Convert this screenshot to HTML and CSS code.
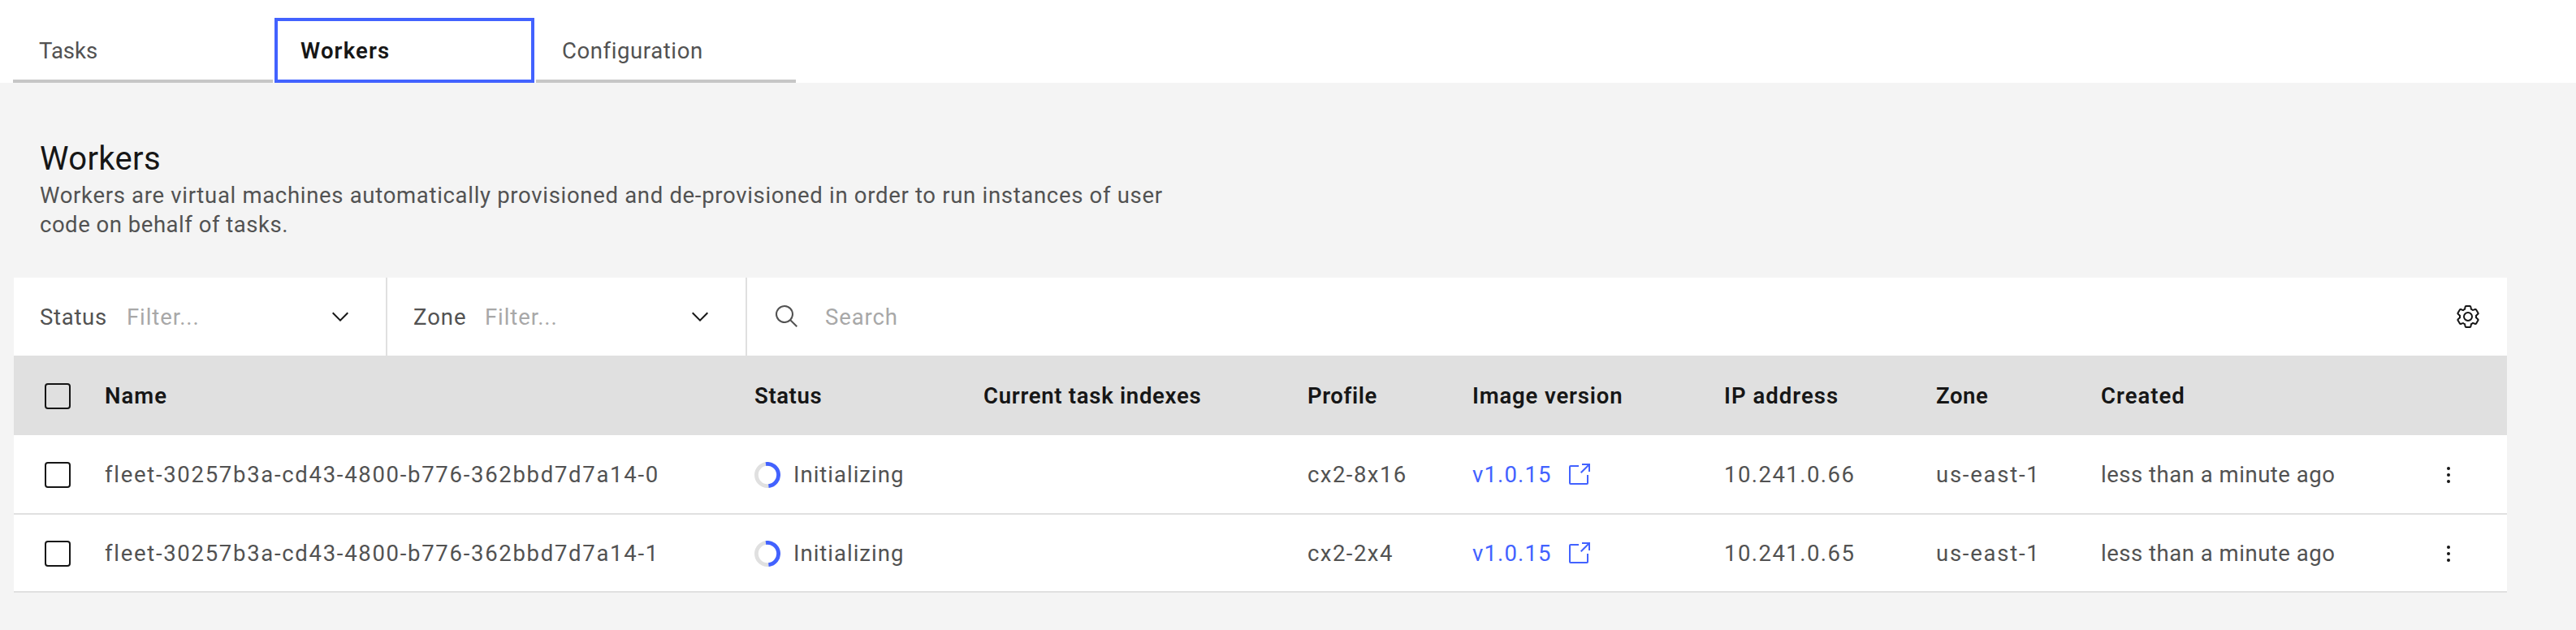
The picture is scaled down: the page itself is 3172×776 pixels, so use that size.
FILE: index.html
```html
<!DOCTYPE html>
<html lang="en">
<head>
<meta charset="utf-8">
<title>Workers</title>
<link rel="stylesheet" href="styles.css">
</head>
<body>
<svg class="defs" width="0" height="0" aria-hidden="true">
  <symbol id="chevron" viewBox="0 0 32 32"><path d="M16 22 6 12l1.4-1.4 8.6 8.6 8.6-8.6L26 12z"/></symbol>
  <symbol id="search" viewBox="0 0 32 32"><path d="m29 27.586-7.552-7.552a11.018 11.018 0 1 0-1.414 1.414L27.586 29ZM4 13a9 9 0 1 1 9 9 9.01 9.01 0 0 1-9-9Z"/></symbol>
  <symbol id="gear" viewBox="0 0 32 32"><path d="M27 16.76v-.76-.77l1.92-1.68A2 2 0 0 0 29.300 11l-2.360-4a2 2 0 0 0-1.730-1 2 2 0 0 0-.64.1l-2.430.82a11.350 11.350 0 0 0-1.310-.75l-.51-2.520a2 2 0 0 0-2-1.610h-4.680a2 2 0 0 0-2 1.610l-.51 2.520a11.480 11.480 0 0 0-1.320.75l-2.380-.86A2 2 0 0 0 6.790 6a2 2 0 0 0-1.730 1L2.700 11a2 2 0 0 0 .41 2.510L5 15.240v1.530l-1.890 1.680A2 2 0 0 0 2.700 21l2.360 4a2 2 0 0 0 1.730 1 2 2 0 0 0 .64-.1l2.430-.82a11.350 11.350 0 0 0 1.310.75l.51 2.520a2 2 0 0 0 2 1.610h4.720a2 2 0 0 0 2-1.610l.51-2.520a11.480 11.480 0 0 0 1.320-.75l2.420.82a2 2 0 0 0 .64.1 2 2 0 0 0 1.730-1l2.280-4a2 2 0 0 0-.41-2.510ZM25.210 24l-3.430-1.160a8.860 8.860 0 0 1-2.710 1.570L18.360 28h-4.720l-.71-3.550a9.360 9.360 0 0 1-2.700-1.570L6.790 24l-2.360-4 2.720-2.400a8.900 8.900 0 0 1 0-3.130L4.430 12l2.360-4 3.430 1.160a8.860 8.860 0 0 1 2.710-1.570L13.640 4h4.720l.71 3.550a9.360 9.360 0 0 1 2.700 1.570L25.210 8l2.360 4-2.720 2.400a8.900 8.900 0 0 1 0 3.130L27.570 20Z"/><path d="M16 22a6 6 0 1 1 6-6 5.940 5.940 0 0 1-6 6Zm0-10a3.910 3.910 0 0 0-4 4 3.910 3.910 0 0 0 4 4 3.910 3.910 0 0 0 4-4 3.910 3.910 0 0 0-4-4Z"/></symbol>
  <symbol id="launch" viewBox="0 0 32 32"><path d="M26 28H6a2 2 0 0 1-2-2V6a2 2 0 0 1 2-2h10v2H6v20h20V16h2v10a2 2 0 0 1-2 2Z"/><path d="M20 2v2h6.586L18 12.586 19.414 14 28 5.414V12h2V2H20z"/></symbol>
  <symbol id="dots" viewBox="0 0 32 32"><circle cx="16" cy="8" r="2"/><circle cx="16" cy="16" r="2"/><circle cx="16" cy="24" r="2"/></symbol>
  <symbol id="spinner" viewBox="0 0 32 32"><circle class="track" cx="16" cy="16" r="13.6"/><path class="arc" d="M14 2.550A13.600 13.600 0 1 1 17.400 29.530"/></symbol>
</svg>

<nav class="tabs">
  <a class="tab ls-tasks">Tasks</a>
  <a class="tab active">Workers</a>
  <a class="tab ls-6">Configuration</a>
</nav>

<main>
  <header class="intro">
    <h1>Workers</h1>
    <p>Workers are virtual machines automatically provisioned and de-provisioned in order to run instances of user<br><span class="ls-5">code on behalf of tasks.</span></p>
  </header>

  <section class="panel">
    <div class="toolbar">
      <div class="filter status"><label>Status</label><span class="hint">Filter...</span><svg class="icon"><use href="#chevron"/></svg></div>
      <div class="filter zone"><label>Zone</label><span class="hint">Filter...</span><svg class="icon"><use href="#chevron"/></svg></div>
      <div class="search"><svg class="icon"><use href="#search"/></svg><span class="hint">Search</span></div>
      <svg class="icon gear"><use href="#gear"/></svg>
    </div>

    <div class="row head">
      <span class="box"></span><span>Name</span><span class="ls-6">Status</span><span class="ls-7">Current task indexes</span><span class="ls-6">Profile</span><span class="ls-8">Image version</span><span>IP address</span><span class="ls-6">Zone</span><span>Created</span><span></span>
    </div>
    <div class="row">
      <span class="box"></span><span class="id">fleet-30257b3a-cd43-4800-b776-362bbd7d7a14-0</span><span class="state"><svg class="icon"><use href="#spinner"/></svg>Initializing</span><span></span><span class="ls-15">cx2-8x16</span><a class="link">v1.0.15<svg><use href="#launch"/></svg></a><span class="ls-15">10.241.0.66</span><span class="ls-17">us-east-1</span><span class="ls-5">less than a minute ago</span><svg class="icon"><use href="#dots"/></svg>
    </div>
    <div class="row last">
      <span class="box"></span><span class="id">fleet-30257b3a-cd43-4800-b776-362bbd7d7a14-1</span><span class="state"><svg class="icon"><use href="#spinner"/></svg>Initializing</span><span></span><span class="ls-15">cx2-2x4</span><a class="link">v1.0.15<svg><use href="#launch"/></svg></a><span class="ls-15">10.241.0.65</span><span class="ls-17">us-east-1</span><span class="ls-5">less than a minute ago</span><svg class="icon"><use href="#dots"/></svg>
    </div>
  </section>
</main>
</body>
</html>
```
FILE: styles.css
```css
* { box-sizing: border-box; }
body {
  margin: 0;
  min-height: 776px;
  background: #f4f4f4;
  color: #525252;
  font: 400 27.5px/36px Roboto, "Liberation Sans", sans-serif;
  letter-spacing: .69px;
  white-space: nowrap;
}
.defs { position: absolute; }
.icon { width: 32px; height: 32px; fill: #161616; flex: none; }

.tabs { display: flex; gap: 2px; height: 102px; padding: 22px 16px 0; background: #fff; }
.tab { width: 320px; height: 80px; padding: 23px 32px 0; border-bottom: 4px solid #c6c6c6; }
.tab.active {
  padding: 19px 28px 0;
  border: 4px solid #4262ff;
  color: #161616;
  font-weight: 600;
  letter-spacing: 1.15px;
}

.intro { height: 240px; padding: 70px 49px 0; }
h1 { margin: 0; color: #161616; font-size: 40px; font-weight: 400; line-height: 48px; letter-spacing: .35px; }
p { margin: 3px 0 0; }

.panel { width: 3070px; margin-left: 17px; background: #fff; }
.toolbar { display: flex; height: 96px; }
.toolbar > * { display: flex; align-items: center; }
.filter { padding-left: 32px; border-right: 2px solid #e0e0e0; }
.filter .icon { margin-left: auto; }
.filter.status { width: 460px; padding-right: 40px; letter-spacing: .71px; }
.filter.zone { width: 443px; padding-right: 40px; letter-spacing: .98px; }
.status label { width: 107px; }
.zone label { width: 88px; }
.hint { color: #a8a8a8; letter-spacing: .9px; padding-top: 2px; }
.filter label { padding-top: 1px; }
.search { flex: 1; padding-left: 33px; }
.search .icon { fill: #525252; margin-right: 31px; }
.gear { margin: 32px 32px 0 0; }

.row {
  display: grid;
  grid-template-columns: 112px 800px 282px 399px 203px 310px 261px 203px 412px 32px;
  align-items: center;
  height: 98px;
  padding-top: 1px;
  border-bottom: 2px solid #e0e0e0;
}
.row.last { height: 96px; }
.head { height: 98px; padding-top: 3px; background: #e0e0e0; color: #161616; font-weight: 600; letter-spacing: 1.02px; }
.head > span:nth-child(n+2) { padding-top: 1px; }
.box { width: 32px; height: 32px; margin-left: 38px; border: 2px solid #161616; border-radius: 4px; }
.id { letter-spacing: 1.7px; }
.state { display: flex; align-items: center; gap: 16px; letter-spacing: 1px; }
.track, .arc { fill: none; stroke-width: 4.8; }
.track { stroke: #e0e0e0; }
.arc { stroke: #4262ff; }
.link { display: flex; align-items: center; gap: 17px; color: #4262ff; letter-spacing: 1.14px; }
.link svg { width: 32px; height: 32px; fill: #4262ff; }

.ls-tasks { letter-spacing: 0; }
.ls-5 { letter-spacing: .52px; }
.ls-6 { letter-spacing: .6px; }
.ls-7 { letter-spacing: .72px; }
.ls-8 { letter-spacing: .85px; }
.ls-15 { letter-spacing: 1.45px; }
.ls-17 { letter-spacing: 1.75px; }
```
